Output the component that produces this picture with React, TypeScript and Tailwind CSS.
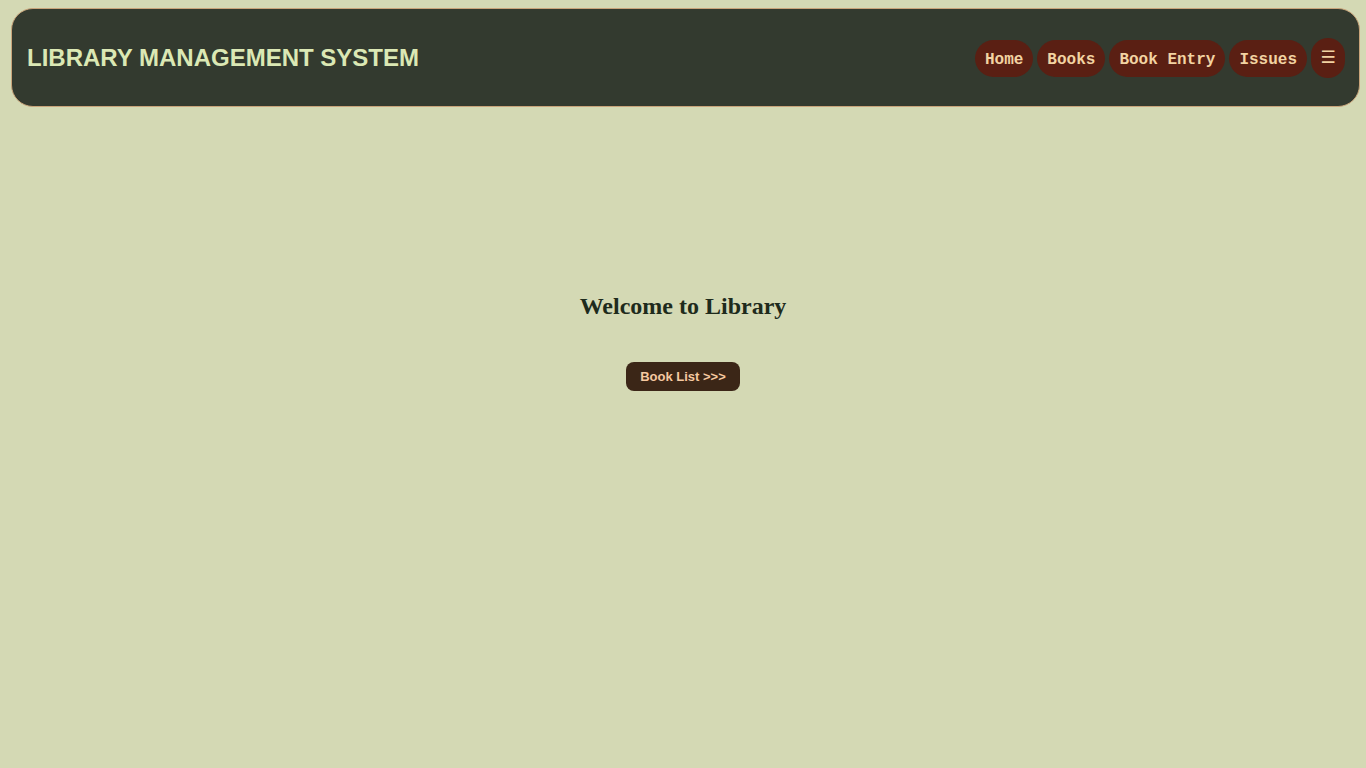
import React from "react";

export default function App() {
  const links = ["Home", "Books", "Book Entry", "Issues"];
  return (
    <div className="min-h-[768px] w-full bg-[#d4d9b4] pt-[8px]">
      <header className="ml-[11px] mr-[6px] h-[99px] rounded-[22px] border border-[#c9a47a] bg-[#333a2f] flex items-center justify-between pl-[15px] pr-[14px]">
        <h1 className="text-[24px] font-bold text-[#dbe8b4] font-['Liberation_Sans',Arial,sans-serif]">
          LIBRARY MANAGEMENT SYSTEM
        </h1>
        <nav className="flex items-center gap-[4px]">
          {links.map((l) => (
            <a
              key={l}
              className="mt-[2px] h-[37px] px-[10px] pt-[2px] rounded-full bg-[#5a1f13] text-[#f2d3a2] text-[16px] font-bold flex items-center font-['Liberation_Mono','Courier_New',monospace]"
            >
              {l}
            </a>
          ))}
          <button className="h-[40px] w-[34px] rounded-full bg-[#5a1f13] text-[#f2d3a2] text-[17px] font-bold flex items-center justify-center font-['DejaVu_Sans',sans-serif]">
            ☰
          </button>
        </nav>
      </header>
      <main className="flex flex-col items-center pt-[185px]">
        <h2 className="text-[24px] font-bold text-[#1e2b1c] leading-[28px] font-['Liberation_Serif','Times_New_Roman',serif]">
          Welcome to Library
        </h2>
        <button className="mt-[42px] h-[29px] px-[14px] rounded-[8px] bg-[#3b2617] text-[#f6c9a0] text-[13px] font-bold font-['Liberation_Sans',Arial,sans-serif]">
          Book List &gt;&gt;&gt;
        </button>
      </main>
    </div>
  );
}
